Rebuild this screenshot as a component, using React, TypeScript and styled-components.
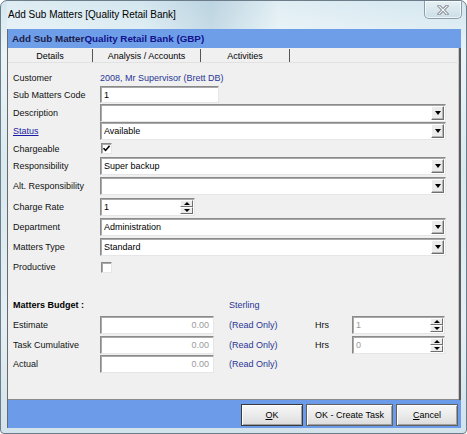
import React from "react";
import styled, { createGlobalStyle } from "styled-components";

const Global = createGlobalStyle`
  html, body { margin: 0; padding: 0; background: #fff; }
  body { font-family: "Liberation Sans", Arial, sans-serif; }
  * { box-sizing: border-box; }
`;

const Window = styled.div`
  width: 467px;
  height: 434px;
  display: flex;
  flex-direction: column;
  border: 1px solid #6c7c88;
  border-radius: 7px 7px 4px 4px;
  background: linear-gradient(180deg, #d3e6ef 0%, #e9f4f7 12%, #d9e9f0 40%, #e4eff4 75%, #d2e3ec 100%);
  padding: 0 5px 5px 6px;
  overflow: hidden;
`;

const TitleBar = styled.div`
  height: 28px;
  display: flex;
  justify-content: space-between;
  align-items: flex-start;
  background: linear-gradient(90deg, rgba(255,255,255,0.25) 0%, rgba(255,255,255,0) 30%, rgba(120,160,185,0.25) 45%, rgba(255,255,255,0.3) 60%, rgba(255,255,255,0) 100%);
`;

const Title = styled.div`
  font-size: 10px;
  color: #000;
  margin-top: 8px;
  margin-left: 1px;
  white-space: nowrap;
`;

const CloseBtn = styled.div`
  width: 38px;
  height: 18px;
  margin-right: -1px;
  border: 1px solid #8d9ca7;
  border-top: none;
  border-radius: 0 0 5px 5px;
  background: linear-gradient(180deg, #e6f0f4 0%, #d9e8ee 50%, #cbdde6 100%);
  box-shadow: inset 0 0 0 1px rgba(255,255,255,0.7);
  display: flex;
  align-items: center;
  justify-content: center;
`;

const Client = styled.div`
  flex: 1;
  display: flex;
  flex-direction: column;
  border-left: 1px solid #6a6a6a;
  background: #f0f0f0;
`;

const Header = styled.div`
  height: 19px;
  background: #6e9ee8;
  display: flex;
  align-items: center;
  padding-left: 4px;
  font-size: 9.8px;
  font-weight: bold;
  color: #1c1c4a;
  white-space: nowrap;
`;

const HeaderStrong = styled.span`
  color: #12128c;
`;

const Body = styled.div`
  flex: 1;
  display: flex;
  flex-direction: column;
  border-right: 2px solid #5a5a5a;
  box-shadow: inset -1px 0 0 #c8c8c8;
`;

const TabStrip = styled.div`
  height: 15px;
  display: flex;
  align-items: flex-end;
  border-bottom: 1px solid #e2e2e2;
`;

const Tab = styled.div<{ $w: number }>`
  width: ${(p) => p.$w}px;
  height: 13px;
  display: flex;
  align-items: center;
  justify-content: center;
  font-size: 9px;
  color: #000;
  border-right: 1px solid #555;
`;

const Panel = styled.div`
  flex: 1;
  display: flex;
  flex-direction: column;
  padding: 6px 0 0 5px;
  border-bottom: 1px solid #8a8a8a;
`;

const Row = styled.div<{ $h: number; $mt?: number }>`
  height: ${(p) => p.$h}px;
  margin-top: ${(p) => p.$mt ?? 0}px;
  display: grid;
  grid-template-columns: 87px auto;
  align-items: center;
`;

const BudgetRow = styled.div<{ $h: number; $mt?: number }>`
  height: ${(p) => p.$h}px;
  margin-top: ${(p) => p.$mt ?? 0}px;
  display: grid;
  grid-template-columns: 87px 114px 15px 86px 37px 93px;
  align-items: center;
`;

const Label = styled.div`
  font-size: 9px;
  color: #111;
  white-space: nowrap;
`;

const LinkLabel = styled(Label)`
  color: #1b1ba3;
  text-decoration: underline;
`;

const BoldLabel = styled(Label)`
  font-weight: bold;
  color: #000;
`;

const BlueText = styled.div`
  font-size: 9px;
  color: #2a3595;
  white-space: nowrap;
`;

const Field = styled.div<{ $w: number; $h?: number; $right?: boolean }>`
  width: ${(p) => p.$w}px;
  height: ${(p) => p.$h ?? 18}px;
  background: #fff;
  border: 1px solid;
  border-color: #8a8a8a #e6e6e6 #e6e6e6 #8a8a8a;
  box-shadow: inset 1px 1px 0 #a9a9a9;
  display: flex;
  align-items: center;
  justify-content: ${(p) => (p.$right ? "flex-end" : "space-between")};
  padding: 0 ${(p) => (p.$right ? 4 : 1)}px 0 3px;
  font-size: 9px;
  color: #000;
  white-space: nowrap;
`;

const Value = styled.span<{ $muted?: boolean }>`
  color: ${(p) => (p.$muted ? "#9a9a9a" : "#000")};
`;

const ArrowBtn = styled.div`
  width: 13px;
  height: 14px;
  background: #ececec;
  border: 1px solid;
  border-color: #ffffff #6f6f6f #6f6f6f #ffffff;
  box-shadow: inset -1px -1px 0 #b5b5b5;
  display: flex;
  align-items: center;
  justify-content: center;
`;

const TriDown = styled.div`
  width: 0;
  height: 0;
  border-left: 3.5px solid transparent;
  border-right: 3.5px solid transparent;
  border-top: 4px solid #000;
`;

const TriUp = styled.div`
  width: 0;
  height: 0;
  border-left: 3px solid transparent;
  border-right: 3px solid transparent;
  border-bottom: 3px solid #000;
`;

const TriDownSmall = styled.div`
  width: 0;
  height: 0;
  border-left: 3px solid transparent;
  border-right: 3px solid transparent;
  border-top: 3px solid #000;
`;

const SpinCol = styled.div`
  display: flex;
  flex-direction: column;
  height: 14px;
`;

const SpinBtn = styled.div`
  width: 13px;
  height: 7px;
  background: #ececec;
  border: 1px solid;
  border-color: #ffffff #6f6f6f #6f6f6f #ffffff;
  display: flex;
  align-items: center;
  justify-content: center;
`;

const Check = styled.div`
  width: 11px;
  height: 11px;
  background: #fff;
  border: 1px solid;
  border-color: #8a8a8a #e6e6e6 #e6e6e6 #8a8a8a;
  box-shadow: inset 1px 1px 0 #a9a9a9;
  margin-left: 1px;
  display: flex;
  align-items: center;
  justify-content: center;
`;

const Footer = styled.div`
  height: 28px;
  background: #6c9ce9;
  display: flex;
  justify-content: flex-end;
  align-items: flex-start;
  gap: 3px;
  padding: 4px 3px 0 0;
`;

const Button = styled.div<{ $w: number; $default?: boolean }>`
  width: ${(p) => p.$w}px;
  height: 22px;
  background: linear-gradient(180deg, #f7f7f7 0%, #ebebeb 50%, #dcdcdc 100%);
  border: 1px solid ${(p) => (p.$default ? "#3a3a3a" : "#606060")};
  box-shadow: inset 1px 1px 0 #fff, inset -1px -1px 0 #a0a0a0;
  display: flex;
  align-items: center;
  justify-content: center;
  font-size: 9px;
  color: #000;
  white-space: nowrap;
`;

const U = styled.span`
  text-decoration: underline;
`;

const Combo = ({ w, value }: { w: number; value?: string }) => (
  <Field $w={w}>
    <Value>{value ?? ""}</Value>
    <ArrowBtn>
      <TriDown />
    </ArrowBtn>
  </Field>
);

const Spin = ({ w, value, muted }: { w: number; value: string; muted?: boolean }) => (
  <Field $w={w}>
    <Value $muted={muted}>{value}</Value>
    <SpinCol>
      <SpinBtn>
        <TriUp />
      </SpinBtn>
      <SpinBtn>
        <TriDownSmall />
      </SpinBtn>
    </SpinCol>
  </Field>
);

export default function App() {
  return (
    <>
      <Global />
      <Window>
        <TitleBar>
          <Title>Add Sub Matters [Quality Retail Bank]</Title>
          <CloseBtn>
            <svg width="12" height="10" viewBox="0 0 12 10">
              <path d="M2 1 L10 9 M10 1 L2 9" stroke="#7a8087" strokeWidth="3" strokeLinecap="square" fill="none" />
              <path d="M2 1 L10 9 M10 1 L2 9" stroke="#f4f7f9" strokeWidth="1.2" strokeLinecap="square" fill="none" />
            </svg>
          </CloseBtn>
        </TitleBar>
        <Client>
          <Header>
            Add Sub Matter<HeaderStrong>Quality Retail Bank (GBP)</HeaderStrong>
          </Header>
          <Body>
            <TabStrip>
              <Tab $w={85}>Details</Tab>
              <Tab $w={108}>Analysis / Accounts</Tab>
              <Tab $w={89}>Activities</Tab>
            </TabStrip>
            <Panel>
              <Row $h={17}>
                <Label>Customer</Label>
                <BlueText>2008, Mr Supervisor (Brett DB)</BlueText>
              </Row>
              <Row $h={17}>
                <Label>Sub Matters Code</Label>
                <Field $w={119} $h={17}>
                  <Value>1</Value>
                </Field>
              </Row>
              <Row $h={18} $mt={1}>
                <Label>Description</Label>
                <Combo w={346} />
              </Row>
              <Row $h={18}>
                <LinkLabel>Status</LinkLabel>
                <Combo w={346} value="Available" />
              </Row>
              <Row $h={17}>
                <Label>Chargeable</Label>
                <Check>
                  <svg width="9" height="9" viewBox="0 0 9 9">
                    <path d="M1.5 4.2 L3.6 6.4 L7.6 1.8" stroke="#000" strokeWidth="1.6" fill="none" />
                  </svg>
                </Check>
              </Row>
              <Row $h={18}>
                <Label>Responsibility</Label>
                <Combo w={346} value="Super backup" />
              </Row>
              <Row $h={18} $mt={2}>
                <Label>Alt. Responsibility</Label>
                <Combo w={346} />
              </Row>
              <Row $h={18} $mt={3}>
                <Label>Charge Rate</Label>
                <Spin w={95} value="1" />
              </Row>
              <Row $h={18} $mt={2}>
                <Label>Department</Label>
                <Combo w={346} value="Administration" />
              </Row>
              <Row $h={18} $mt={2}>
                <Label>Matters Type</Label>
                <Combo w={346} value="Standard" />
              </Row>
              <Row $h={18} $mt={2}>
                <Label>Productive</Label>
                <Check />
              </Row>
              <BudgetRow $h={16} $mt={21}>
                <BoldLabel>Matters Budget :</BoldLabel>
                <div />
                <div />
                <BlueText>Sterling</BlueText>
              </BudgetRow>
              <BudgetRow $h={18} $mt={3}>
                <Label>Estimate</Label>
                <Field $w={114} $right>
                  <Value $muted>0.00</Value>
                </Field>
                <div />
                <BlueText>(Read Only)</BlueText>
                <Label>Hrs</Label>
                <Spin w={93} value="1" muted />
              </BudgetRow>
              <BudgetRow $h={18} $mt={2}>
                <Label>Task Cumulative</Label>
                <Field $w={114} $right>
                  <Value $muted>0.00</Value>
                </Field>
                <div />
                <BlueText>(Read Only)</BlueText>
                <Label>Hrs</Label>
                <Spin w={93} value="0" muted />
              </BudgetRow>
              <BudgetRow $h={18} $mt={1}>
                <Label>Actual</Label>
                <Field $w={114} $right>
                  <Value $muted>0.00</Value>
                </Field>
                <div />
                <BlueText>(Read Only)</BlueText>
              </BudgetRow>
            </Panel>
          </Body>
          <Footer>
            <Button $w={62} $default>
              <U>O</U>K
            </Button>
            <Button $w={87}>OK - Create Task</Button>
            <Button $w={62}>
              <U>C</U>ancel
            </Button>
          </Footer>
        </Client>
      </Window>
    </>
  );
}
